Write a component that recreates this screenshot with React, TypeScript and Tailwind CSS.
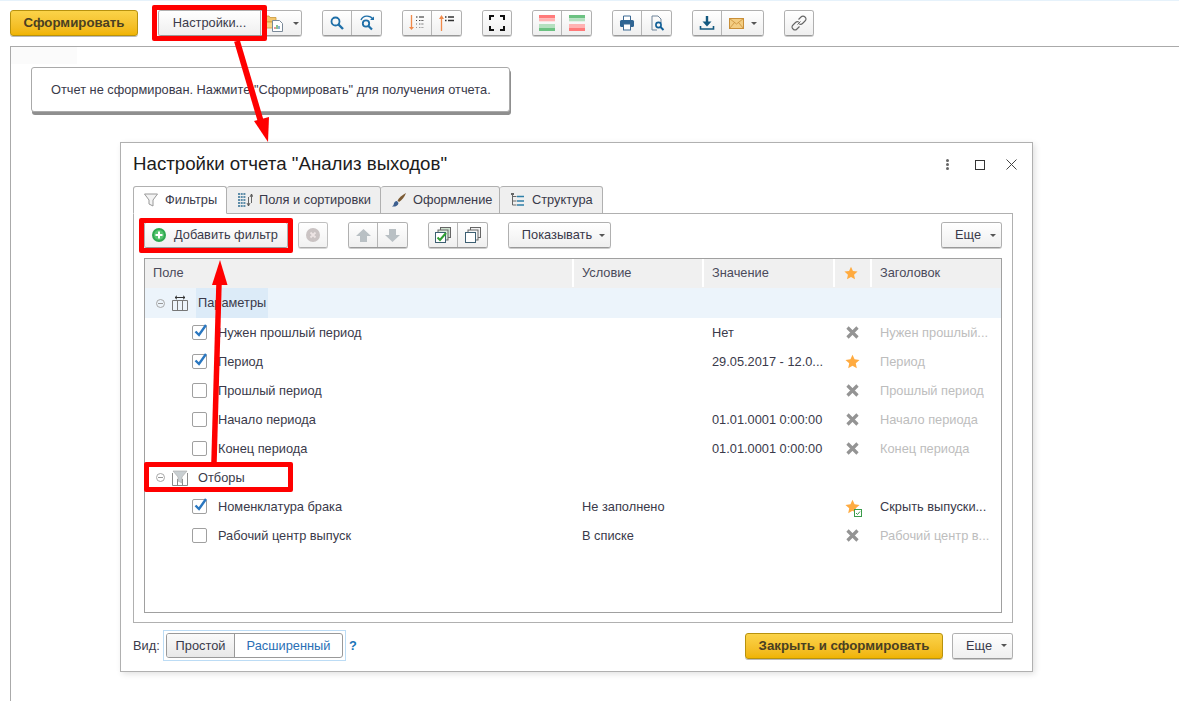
import type { ReactNode } from "react";

const caret = <span className="ml-[7px] inline-block h-0 w-0 border-x-[3.5px] border-t-[3.5px] border-x-transparent border-t-[#555]" />;
const wideCaret = <span className="ml-[9px] inline-block h-0 w-0 border-x-[3.5px] border-t-[3.5px] border-x-transparent border-t-[#555]" />;

function Btn({ w, children, cls = "" }: { w: string; children: ReactNode; cls?: string }) {
  return (
    <div className={`${w} flex h-full items-center justify-center bg-gradient-to-b from-white to-[#efefef] ${cls}`}>{children}</div>
  );
}

function Group({ children, cls = "h-[26px]" }: { children: ReactNode; cls?: string }) {
  return (
    <div className={`${cls} flex shrink-0 divide-x divide-[#b5b5b5] overflow-hidden rounded-[3px] border border-[#b0b0b0] border-b-[#999] shadow-[0_1px_0_#ccc]`}>
      {children}
    </div>
  );
}

function Yellow({ w, children }: { w: string; children: ReactNode }) {
  return (
    <div className={`${w} flex h-[26px] shrink-0 items-center justify-center rounded-[3px] border border-[#b8920e] bg-gradient-to-b from-[#fbd348] to-[#f0b400] text-[13.25px] font-bold text-[#4a4022] shadow-[0_1px_0_#bbb]`}>
      {children}
    </div>
  );
}

const Sv = ({ s = 16, children }: { s?: number; children: ReactNode }) => (
  <svg width={s} height={s} viewBox="0 0 16 16" fill="none">{children}</svg>
);

const Search = () => (
  <Sv><circle cx="6.5" cy="6.5" r="4" stroke="#1f6fa8" strokeWidth="1.8" /><path d="M9.5 9.5 14 14" stroke="#1f6fa8" strokeWidth="2.4" /></Sv>
);
const SearchAgain = () => (
  <Sv><path d="M2 5 C4 0 11 0 14 4" stroke="#1f6fa8" strokeWidth="1.4" /><path d="M11 5h4V1.5z" fill="#1f6fa8" /><circle cx="7" cy="8.5" r="3.2" stroke="#1f6fa8" strokeWidth="1.8" /><path d="M9.5 11 13 14.5" stroke="#1f6fa8" strokeWidth="2.2" /></Sv>
);
const FileChart = () => (
  <svg width="22" height="18" viewBox="0 0 22 18" fill="none">
    <path d="M1 2h4l1 1.5h6V8H1z" fill="#f2c56b" stroke="#c9973a" strokeWidth=".8" />
    <path d="M1 8h9v6H1z" fill="#f7d68a" stroke="#c9973a" strokeWidth=".8" />
    <path d="M8.5 6.5h7l3 3v8h-10z" fill="#fff" stroke="#7b8a99" />
    <path d="M11 15v-2" stroke="#d9534f" strokeWidth="1.2" /><path d="M13 15v-4" stroke="#3a9b4a" strokeWidth="1.2" /><path d="M15 15v-3" stroke="#3a7fc1" strokeWidth="1.2" />
  </svg>
);
const SortDown = () => (
  <Sv>
    <path d="M2.5 0v13" stroke="#f08a4b" strokeWidth="1.3" /><path d="M0 12h5l-2.5 3z" fill="#f08a4b" />
    <path d="M7 2h1.5M10 2h5" stroke="#222" strokeWidth="1.2" />
    <path d="M7 5.5h1.5M10 5.5h5" stroke="#444" strokeWidth="1.2" strokeDasharray="1 .6" />
    <path d="M7 9h1.5M10 9h5" stroke="#666" strokeWidth="1.2" strokeDasharray="1 .6" />
    <path d="M7 12.5h1.5M10 12.5h5" stroke="#999" strokeWidth="1.2" strokeDasharray="1 .6" />
  </Sv>
);
const SortUp = () => (
  <Sv>
    <path d="M2.5 16V3" stroke="#f08a4b" strokeWidth="1.3" /><path d="M0 4h5L2.5 0z" fill="#f08a4b" />
    <path d="M6 2h1.5M9 2h6M6 5.5h1.5M9 5.5h6" stroke="#333" strokeWidth="1.3" />
  </Sv>
);
const Full = () => (
  <Sv><path d="M1 5V1h4M11 1h4v4M15 11v4h-4M5 15H1v-4" stroke="#111" strokeWidth="2" /></Sv>
);
const Stripes = ({ a, b, c, d }: { a: string; b: string; c: string; d: string }) => (
  <svg width="16" height="16" viewBox="0 0 16 16">
    <rect y="0" width="16" height="3.3" fill={a} /><rect y="3.3" width="16" height="3" fill={b} /><rect y="9" width="16" height="4" fill={c} /><rect y="13" width="16" height="3" fill={d} />
  </svg>
);
const Printer = () => (
  <Sv><path d="M4.5 5V1h7v4" stroke="#3d6a94" strokeWidth="1" fill="#fff" /><rect x="1" y="5" width="14" height="7" rx="1.5" fill="#2f6593" /><rect x="4.5" y="9" width="7" height="6" fill="#fff" stroke="#3d6a94" /></Sv>
);
const Preview = () => (
  <Sv><path d="M3 1h6l3 3v4M3 1v14h5" stroke="#6f8499" strokeWidth="1" /><circle cx="9.5" cy="10" r="2.6" stroke="#0f5e96" strokeWidth="1.6" /><path d="M11.5 12l3 3" stroke="#0f5e96" strokeWidth="2" /></Sv>
);
const Download = () => (
  <Sv><path d="M8 1v7" stroke="#12587f" strokeWidth="2.4" /><path d="M3.5 6.5h9L8 11.5z" fill="#12587f" /><path d="M1.5 11v3h13v-3" stroke="#12587f" strokeWidth="1.6" /></Sv>
);
const Mail = () => (
  <svg width="15" height="11" viewBox="0 0 15 11"><rect x=".5" y=".5" width="14" height="10" fill="#f3cd82" stroke="#c98f38" /><path d="M.5.5 7.5 6l7-5.5M.5 10.5 5.5 4.5M14.5 10.5 9.5 4.5" fill="none" stroke="#c98f38" strokeWidth=".8" /></svg>
);
const Chain = () => (
  <Sv><path d="M6.5 9.5 9.5 6.5" stroke="#666" strokeWidth="1" /><path d="M7.5 4.5 10 2a2.8 2.8 0 0 1 4 4l-2.500 2.500a2.8 2.8 0 0 1-3.500.4M8.500 11.500 6 14a2.8 2.8 0 0 1-4-4l2.500-2.500a2.8 2.8 0 0 1 3.500-.4" stroke="#666" strokeWidth="1.1" /></Sv>
);
const Funnel = () => (
  <Sv><path d="M1.5 2h13L10 8v6l-4-2V8z" fill="#f3f3f3" stroke="#999" strokeWidth="1" /></Sv>
);
const Fields = () => (
  <Sv><path d="M1 2h8M1 5h8M1 8h8M1 11h8M1 14h8" stroke="#2f6d92" strokeWidth="1.5" strokeDasharray="2 .7" /><path d="M11.5 14V5M14.500 2v9" stroke="#666" /><path d="M10 11l1.500 3 1.500-3M13 5l1.500-3L16 5" stroke="#555" strokeWidth=".9" /></Sv>
);
const Brush = () => (
  <Sv><path d="M15 1C11 3 8 6 6.500 8.500l1.500 1.500C10.500 8.500 13.500 5 15 1z" fill="#7b5a33" /><path d="M6 9c-2 0-3 1.500-3.200 3C2.600 13.500 1.500 14 1 14.500c3 .5 6-.5 6.500-3.500z" fill="#3d5f8f" /></Sv>
);
const Tree = () => (
  <Sv><path d="M2.500 1v12M2.500 4.500h4M2.500 9h4M2.500 13h4" stroke="#666" /><rect x="1" y="1" width="3" height="2" fill="#666" /><path d="M7 4.500h7M7 9h7M7 13h7" stroke="#2f7fa8" strokeWidth="1.6" /></Sv>
);
const PlusCircle = () => (
  <Sv><circle cx="8" cy="8" r="7" fill="#2ea84f" /><circle cx="8" cy="8" r="5" fill="#55c46e" /><path d="M8 4.500v7M4.500 8h7" stroke="#fff" strokeWidth="2" /></Sv>
);
const XCircle = () => (
  <Sv><circle cx="8" cy="8" r="7" fill="#bdb5b5" /><path d="M5.500 5.500l5 5M10.500 5.500l-5 5" stroke="#e9dede" strokeWidth="1.8" /></Sv>
);
const Arrow = ({ up }: { up?: boolean }) => (
  <svg width="15" height="13" viewBox="0 0 15 13"><path d={up ? "M7.500 0 15 7h-4v6H4V7H0z" : "M7.500 13 15 6h-4V0H4v6H0z"} fill="#b9c0c4" /></svg>
);
const Layers = ({ check }: { check?: boolean }) => (
  <Sv>
    <rect x="5.500" y=".5" width="10" height="10" fill={check ? "#cfe3d0" : "#f2f2f2"} stroke="#666" />
    <rect x="3" y="3" width="10" height="10" fill={check ? "#dcebdc" : "#f7f7f7"} stroke="#666" />
    <rect x=".5" y="5.500" width="10" height="10" fill="#fff" stroke="#3c5f72" />
    {check && <path d="M2.500 10.500l2.500 2.500 6-7" stroke="#2fa032" strokeWidth="2" />}
  </Sv>
);
const Star = ({ s = 15 }: { s?: number }) => (
  <svg width={s} height={s} viewBox="0 0 16 16"><path d="M8 .8l2.200 4.900 5.300.6-4 3.600 1.100 5.300L8 12.500l-4.600 2.700 1.100-5.300-4-3.600 5.300-.6z" fill="#ffab40" /></svg>
);
const Cross = () => (
  <svg width="13" height="13" viewBox="0 0 13 13"><path d="M1.500 1.500l10 10M11.500 1.500l-10 10" stroke="#949494" strokeWidth="3.2" /></svg>
);
const ParamIcon = () => (
  <svg width="16" height="16" viewBox="0 0 16 16" fill="none"><path d="M.5 5.500h15v10H.5zM5.500 5.500v10M10.500 5.500v10" stroke="#777" /><path d="M3 2.500h10" stroke="#333" /><path d="M5 .8 3 2.500l2 1.700M11 .8l2 1.700-2 1.700" stroke="#333" /></svg>
);
const FilterIcon = () => (
  <svg width="16" height="16" viewBox="0 0 16 16" fill="none"><path d="M.5 3v12.500h15V3M5.500 9v6.500M10.500 9v6.500" stroke="#8a8a8a" /><path d="M1 1h14l-5 6v6l-4-2V7z" fill="#c9cfd2" stroke="#aaa" strokeWidth=".6" /></svg>
);

function Box({ on }: { on?: boolean }) {
  return (
    <span className="relative h-[15px] w-[15px] shrink-0 rounded-[2px] border border-[#a0a0a0] bg-white">
      {on && (
        <svg className="absolute -top-[3px] left-0" width="15" height="16" viewBox="0 0 15 16" fill="none">
          <path d="M2.500 8.500l3.500 3.500 7-10" stroke="#2a77c0" strokeWidth="2.4" />
        </svg>
      )}
    </span>
  );
}

function Minus() {
  return (
    <span className="flex h-[9px] w-[9px] shrink-0 items-center justify-center rounded-full border border-[#a8a8a8]">
      <span className="h-px w-[5px] bg-[#999]" />
    </span>
  );
}

type RowData = { name: string; on?: boolean; cond?: string; val?: string; star?: "on" | "check"; title: string };

const params: RowData[] = [
  { name: "Нужен прошлый период", on: true, val: "Нет", title: "Нужен прошлый..." },
  { name: "Период", on: true, val: "29.05.2017 - 12.0...", star: "on", title: "Период" },
  { name: "Прошлый период", title: "Прошлый период" },
  { name: "Начало периода", val: "01.01.0001 0:00:00", title: "Начало периода" },
  { name: "Конец периода", val: "01.01.0001 0:00:00", title: "Конец периода" },
];
const filters: RowData[] = [
  { name: "Номенклатура брака", on: true, cond: "Не заполнено", star: "check", title: "Скрыть выпуски..." },
  { name: "Рабочий центр выпуск", cond: "В списке", title: "Рабочий центр в..." },
];

function Row({ r }: { r: RowData }) {
  return (
    <div className="flex h-[29px] items-center">
      <div className="flex w-[429px] items-center gap-[11px] pl-[47px]"><Box on={r.on} /><span>{r.name}</span></div>
      <div className="w-[130px] pl-[8px]">{r.cond}</div>
      <div className="w-[131px] pl-[8px] whitespace-nowrap">{r.val}</div>
      <div className="flex w-[37px] items-center justify-center pr-[3px]">
        {r.star ? (
          <span className="relative flex">
            <Star />
            {r.star === "check" && (
              <svg className="absolute -bottom-[3px] -right-[2px]" width="8" height="8" viewBox="0 0 8 8" fill="none">
                <rect x=".5" y=".5" width="7" height="7" fill="#fff" stroke="#3a9b4a" />
                <path d="M2 4l1.500 1.500L6 2.500" stroke="#3a9b4a" />
              </svg>
            )}
          </span>
        ) : <Cross />}
      </div>
      <div className={`pl-[8px] ${r.star === "check" ? "" : "text-[#bdbdbd]"}`}>{r.title}</div>
    </div>
  );
}

function GroupRow({ icon, name, cls = "", hl = "" }: { icon: ReactNode; name: string; cls?: string; hl?: string }) {
  return (
    <div className={`flex items-center pl-[11px] ${cls}`}>
      <Minus />
      <span className="ml-[7px] flex">{icon}</span>
      <span className={`ml-[8px] flex h-full items-center px-[2px] ${hl}`}>{name}</span>
    </div>
  );
}

const tabs = [
  { n: "Фильтры", w: "w-[94px]", i: <Funnel />, on: true },
  { n: "Поля и сортировки", w: "w-[154px]", i: <Fields /> },
  { n: "Оформление", w: "w-[119px]", i: <Brush /> },
  { n: "Структура", w: "w-[103px]", i: <Tree /> },
];

function Dialog() {
  return (
    <div className="absolute left-[120px] top-[142px] flex h-[530px] w-[913px] flex-col border border-[#b0b0b0] bg-white pl-[12px] pr-[19px] text-[#3a3a4a] shadow-[2px_2px_6px_rgba(0,0,0,.12)]">
      <div className="flex h-[43px] shrink-0 items-center justify-between">
        <div className="text-[18.7px] text-[#1c1c1c]">Настройки отчета "Анализ выходов"</div>
        <div className="-mr-[4px] flex items-center">
          <span className="flex flex-col gap-px"><i className="h-[3px] w-[3px] rounded-full bg-[#666]" /><i className="h-[3px] w-[3px] rounded-full bg-[#666]" /><i className="h-[3px] w-[3px] rounded-full bg-[#666]" /></span>
          <span className="ml-[26px] h-[10px] w-[10px] border border-[#333]" />
          <svg className="ml-[21px]" width="11" height="11" viewBox="0 0 11 11"><path d="M.5.500l10 10M10.500.500l-10 10" stroke="#444" /></svg>
        </div>
      </div>
      <div className="flex h-[28px] shrink-0">
        {tabs.map((t) => (
          <div key={t.n} className={`${t.w} relative flex items-center gap-[6px] rounded-t-[3px] border border-[#b0b0b0] ${t.on ? "z-10 border-b-white bg-white pl-[9px]" : "border-l-0 bg-[#efefef] pl-[10px]"}`}>
            {t.i}<span className="whitespace-nowrap">{t.n}</span>
          </div>
        ))}
      </div>
      <div className="-mt-px flex h-[410px] flex-col border border-[#b0b0b0] px-[10px] pt-[8px]">
        <div className="flex h-[26px] shrink-0 items-center">
          <Group cls="h-[26px] w-[144px]"><Btn w="w-full"><div className="mr-auto flex items-center gap-[7px] pl-[6px]"><PlusCircle /><span className="whitespace-nowrap">Добавить фильтр</span></div></Btn></Group>
          <div className="ml-[10px]"><Group cls="h-[26px] w-[30px] opacity-80"><Btn w="w-full"><XCircle /></Btn></Group></div>
          <div className="ml-[20px]"><Group cls="h-[26px] w-[60px]"><Btn w="w-1/2"><Arrow up /></Btn><Btn w="w-1/2"><Arrow /></Btn></Group></div>
          <div className="ml-[20px]"><Group cls="h-[26px] w-[60px]"><Btn w="w-1/2"><Layers check /></Btn><Btn w="w-1/2"><Layers /></Btn></Group></div>
          <div className="ml-[20px]"><Group cls="h-[26px] w-[103px]"><Btn w="w-full" cls="pl-[8px]"><span>Показывать</span>{caret}</Btn></Group></div>
          <div className="ml-auto"><Group cls="h-[26px] w-[61px]"><Btn w="w-full" cls="pl-[8px]"><span>Еще</span>{wideCaret}</Btn></Group></div>
        </div>
        <div className="mt-[10px] flex h-[355px] flex-col border border-[#a0a0a0]">
          <div className="flex h-[29px] shrink-0 divide-x-2 divide-white bg-[#f0f0f0] pb-[1px] text-[#4a4a5a]">
            <div className="flex w-[429px] items-center pl-[8px]">Поле</div>
            <div className="flex w-[130px] items-center pl-[8px]">Условие</div>
            <div className="flex w-[131px] items-center pl-[8px]">Значение</div>
            <div className="flex w-[37px] items-center justify-center pr-[3px]"><Star s={14} /></div>
            <div className="flex flex-1 items-center pl-[8px]">Заголовок</div>
          </div>
          <GroupRow icon={<ParamIcon />} name="Параметры" cls="h-[30px] bg-[#ecf4fb]" hl="bg-[#dcebf8]" />
          {params.map((r) => <Row key={r.name} r={r} />)}
          <GroupRow icon={<FilterIcon />} name="Отборы" cls="h-[29px]" />
          {filters.map((r) => <Row key={r.name} r={r} />)}
        </div>
      </div>
      <div className="flex flex-1 items-center pb-[3px]">
        <span className="w-[30px]">Вид:</span>
        <div className="border border-[#bcdcf5] p-[2px]">
          <div className="flex h-[25px] w-[177px] overflow-hidden rounded-[3px] border border-[#999]">
            <div className="flex w-[68px] items-center justify-center border-r border-[#999] bg-gradient-to-b from-[#fafafa] to-[#e8e8e8]">Простой</div>
            <div className="flex flex-1 items-center justify-center text-[#2a6fb5]">Расширенный</div>
          </div>
        </div>
        <span className="ml-[3px] font-bold text-[#1a74b8]">?</span>
        <div className="ml-auto mr-[9px]"><Yellow w="w-[198px]">Закрыть и сформировать</Yellow></div>
        <Group cls="h-[26px] w-[61px]"><Btn w="w-full" cls="pl-[8px]"><span>Еще</span>{wideCaret}</Btn></Group>
      </div>
    </div>
  );
}

export default function App() {
  return (
    <div className="relative h-[701px] w-[1179px] overflow-hidden bg-white font-['Liberation_Sans',Arial,sans-serif] text-[12.8px] text-[#3a3a4a]">
      <div className="h-[1px] bg-[#e6f2fb]" />
      <div className="flex h-[45px] items-start pl-[10px] pt-[9px]">
        <Yellow w="w-[128px]">Сформировать</Yellow>
        <div className="ml-[20px]"><Group><Btn w="w-[102px]"><span>Настройки...</span></Btn><Btn w="w-[40px]"><FileChart />{caret}</Btn></Group></div>
        <div className="ml-[20px]"><Group><Btn w="w-[29px]"><Search /></Btn><Btn w="w-[29px]"><SearchAgain /></Btn></Group></div>
        <div className="ml-[20px]"><Group><Btn w="w-[29px]"><SortDown /></Btn><Btn w="w-[29px]"><SortUp /></Btn></Group></div>
        <div className="ml-[20px]"><Group><Btn w="w-[28px]"><Full /></Btn></Group></div>
        <div className="ml-[20px]"><Group><Btn w="w-[29px]"><Stripes a="#ff7a7a" b="#ffb3b3" c="#b5e0c0" d="#6cc282" /></Btn><Btn w="w-[29px]"><Stripes a="#6cc282" b="#b5e0c0" c="#ffb3b3" d="#ff7a7a" /></Btn></Group></div>
        <div className="ml-[20px]"><Group><Btn w="w-[29px]"><Printer /></Btn><Btn w="w-[29px]"><Preview /></Btn></Group></div>
        <div className="ml-[20px]"><Group><Btn w="w-[29px]"><Download /></Btn><Btn w="w-[41px]"><Mail />{caret}</Btn></Group></div>
        <div className="ml-[20px]"><Group><Btn w="w-[28px]"><Chain /></Btn></Group></div>
      </div>
      <div className="ml-[10px] h-[655px] border-l border-t border-[#aaa] pl-[20px]">
        <div className="-ml-[20px] h-[20px]"><div className="h-[17px] w-[66px] bg-[#fbfbfb]" /></div>
        <div className="flex h-[45px] w-[479px] items-center rounded-[3px] border border-[#aaa] bg-white pl-[19px] pt-[1px] shadow-[1px_3px_0_#8f8f8f]">
          Отчет не сформирован. Нажмите "Сформировать" для получения отчета.
        </div>
      </div>
      <Dialog />
      <div className="absolute left-[152px] top-[5px] h-[36px] w-[115px] rounded-[2px] border-[5px] border-[#f00]" />
      <div className="absolute left-[139px] top-[218px] h-[35px] w-[154px] rounded-[2px] border-[5px] border-[#f00]" />
      <div className="absolute left-[144px] top-[462px] h-[30px] w-[149px] rounded-[2px] border-[5px] border-[#f00]" />
      <svg className="absolute left-0 top-0" width="1179" height="701" fill="none">
        <path d="M237 41 261 122" stroke="#f00" strokeWidth="6" />
        <path d="M268 142 254 121 269 117z" fill="#f00" />
        <path d="M214 462 219 283" stroke="#f00" strokeWidth="5.5" />
        <path d="M220 260 227.5 285 212 285z" fill="#f00" />
      </svg>
    </div>
  );
}
